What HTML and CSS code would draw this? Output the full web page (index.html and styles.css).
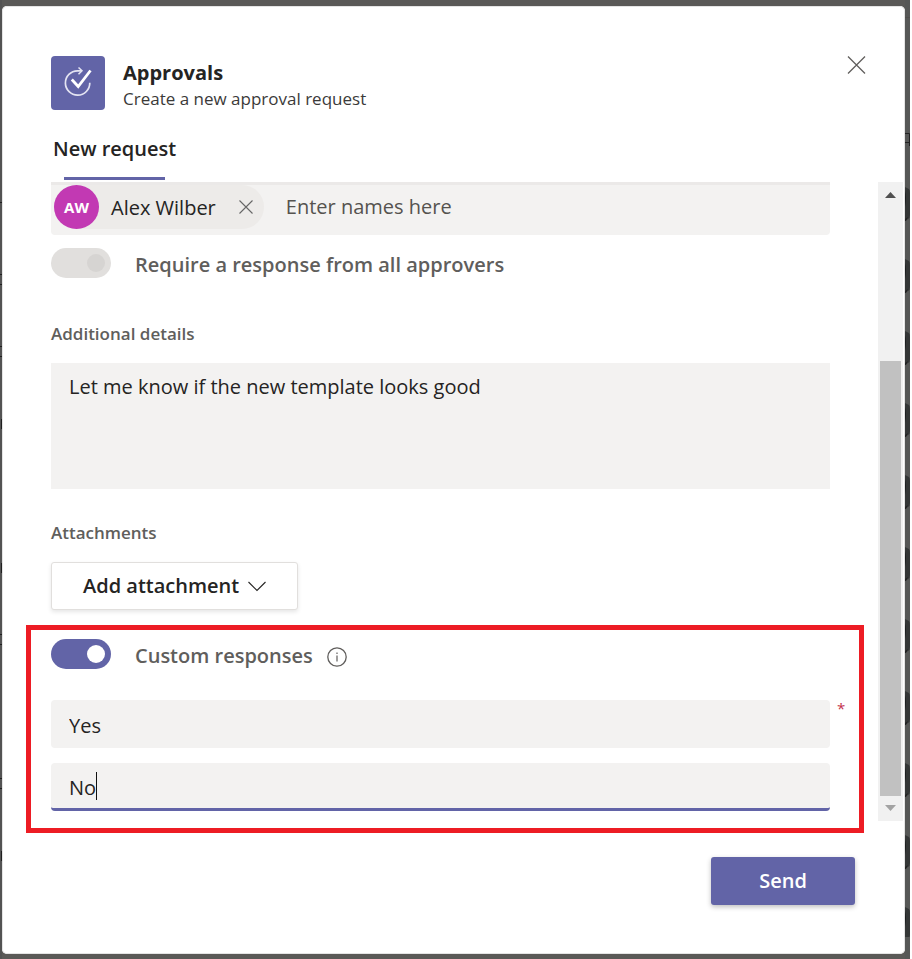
FILE: index.html
```html
<!DOCTYPE html>
<html lang="en">
<head>
<meta charset="utf-8">
<title>Approvals</title>
<link rel="stylesheet" href="styles.css">
</head>
<body>
<div class="backdrop">
  <svg class="edge edge-left" width="2" height="959" aria-hidden="true">
    <g fill="#1f1f1f">
      <rect y="202" width="2" height="1"/><rect y="274" width="2" height="1"/><rect y="284" width="2" height="1"/>
      <rect y="346" width="2" height="1"/><rect y="356" width="2" height="1"/><rect x="1" y="419" width="1" height="10"/>
      <rect x="1" y="563" width="1" height="10"/><rect y="634" width="2" height="1"/><rect y="644" width="2" height="1"/>
      <rect y="778" width="2" height="1"/><rect y="788" width="2" height="1"/><rect x="1" y="851" width="1" height="10"/>
    </g>
  </svg>
  <main class="dialog" role="dialog" aria-labelledby="title">
    <header class="header">
      <svg class="logo" viewBox="0 0 54 54" aria-hidden="true">
        <rect width="54" height="54" rx="4" fill="#6264a7"/>
        <path d="M30 14.800H26.500A12.200 12.200 0 1 0 38.800 26.800" fill="none" stroke="#e4e4f2" stroke-width="1.700"/>
        <path d="M27.500 11.500L31 14.800L27.500 18.200" fill="none" stroke="#e4e4f2" stroke-width="1.500"/>
        <path d="M20.800 23.500L27.200 30.500L39.500 14.500" fill="none" stroke="#fff" stroke-width="2.800"/>
      </svg>
      <div class="heading">
        <h1 id="title">Approvals</h1>
        <p>Create a new approval request</p>
      </div>
      <button class="icon-button" type="button" aria-label="Close">
        <svg width="20" height="18" viewBox="0 0 20 18"><path d="M1 .5L18 17.500M18 .5L1 17.500" fill="none" stroke="#605e5c" stroke-width="1.300"/></svg>
      </button>
    </header>
    <nav class="tabs"><a href="#request">New request</a></nav>
    <div class="body">
      <form class="form" id="request">
        <div class="people">
          <span class="chip">
            <span class="avatar">AW</span>
            <span class="name">Alex Wilber</span>
            <button class="icon-button" type="button" aria-label="Remove Alex Wilber">
              <svg width="16" height="16" viewBox="0 0 16 16"><path d="M1.500 1.500L14.500 14.500M14.500 1.500L1.500 14.500" fill="none" stroke="#666" stroke-width="1.100"/></svg>
            </button>
          </span>
          <input type="text" placeholder="Enter names here" aria-label="Approvers">
        </div>
        <div class="switch-row">
          <input class="switch" type="checkbox" id="all" checked disabled>
          <label for="all">Require a response from all approvers</label>
        </div>
        <label class="caption" for="details">Additional details</label>
        <textarea id="details">Let me know if the new template looks good</textarea>
        <span class="caption">Attachments</span>
        <button class="attach" type="button">Add attachment
          <svg width="18" height="11" viewBox="0 0 18 11" aria-hidden="true"><path d="M.5 1L9 9.500L17.500 1" fill="none" stroke="#252423" stroke-width="1.100"/></svg>
        </button>
        <section class="responses">
          <div class="switch-row">
            <input class="switch" type="checkbox" id="custom" checked>
            <label for="custom">Custom responses</label>
            <svg class="info" width="20" height="20" viewBox="0 0 20 20" aria-hidden="true"><circle cx="10" cy="10" r="9.200" fill="none" stroke="#605e5c" stroke-width="1.300"/><path d="M10 8.500V14.500M10 5.500V7" stroke="#605e5c" stroke-width="1.200"/></svg>
          </div>
          <div class="field">
            <input type="text" value="Yes" aria-label="Response 1" required>
            <span class="required">*</span>
          </div>
          <div class="field">
            <input class="active" type="text" value="No" aria-label="Response 2">
            <span class="caret"></span>
          </div>
        </section>
      </form>
      <div class="scrollbar" aria-hidden="true">
        <svg class="up" width="11" height="6" viewBox="0 0 11 6"><path d="M0 6L5.500 0L11 6Z" fill="#505050"/></svg>
        <div class="track"><div class="thumb"></div></div>
        <svg width="11" height="6" viewBox="0 0 11 6"><path d="M0 0L5.500 6L11 0Z" fill="#a3a3a3"/></svg>
      </div>
    </div>
    <footer class="footer"><button class="send" type="button">Send</button></footer>
  </main>
  <svg class="edge edge-right" width="5" height="959" aria-hidden="true">
    <defs>
      <pattern id="rows" width="5" height="72" y="187" patternUnits="userSpaceOnUse">
        <path d="M0 0L4 2Q5 3 5 6V28Q5 31 3 32L0 34Z" fill="#343636"/>
        <path d="M0 4Q2 10 0 20Z" fill="#1b1d1e"/>
        <path d="M0 32L3 30L1 34H0Z" fill="#202020"/>
      </pattern>
    </defs>
    <rect y="187" width="5" height="750" fill="url(#rows)"/>
    <path d="M0 133.500H4.500V146M0 142.500H4" fill="none" stroke="#222"/>
    <rect y="17" width="5" height="1" fill="#504f4d"/>
  </svg>
</div>
</body>
</html>
```
FILE: styles.css
```css
* { box-sizing: border-box; }

body {
  margin: 0;
  padding-right: 2px;
  background: #fff;
  color: #252423;
  font: 20px/28px "Open Sans", "Noto Sans", sans-serif;
}

button, input, textarea { font: inherit; color: inherit; border: 0; margin: 0; }
input, textarea { background: #f3f2f1; border-radius: 4px; outline: 0; }

.backdrop {
  display: flex;
  height: 100vh;
  min-height: 959px;
  overflow: hidden;
  background: #5a5957;
}

.edge { flex: none; background: #535353; }
.edge-right { background: #565756; }

.dialog {
  flex: 1;
  min-width: 0;
  display: flex;
  flex-direction: column;
  margin: 6px 0 5px;
  background: #fff;
  border-radius: 5px;
  box-shadow: inset 0 0 0 1px #e4e4e4;
}

.header {
  display: flex;
  align-items: flex-start;
  padding: 50px 38px 0 49px;
}

.logo { width: 54px; height: 54px; }
.heading { flex: 1; padding: 4px 0 0 18px; }
h1 { margin: 0; font-size: 20px; line-height: 26px; font-weight: 700; }
p { margin: 0; color: #3b3a39; font-size: 17px; line-height: 26px; }

.icon-button { display: flex; padding: 0; background: none; }

.tabs { margin-left: 51px; height: 70px; padding-top: 23px; }
.tabs a {
  display: inline-flex;
  flex-direction: column;
  align-items: center;
  color: inherit;
  font-weight: 600;
  text-decoration: none;
}
.tabs a::after { content: ""; width: 101px; height: 3px; margin-top: 14px; background: #6264a7; }

.body { flex: 1; display: flex; }
.form { flex: 1; min-width: 0; display: flex; flex-direction: column; padding: 0 48px 0 49px; }

.people {
  display: flex;
  height: 53px;
  padding-left: 3px;
  background: #f3f2f1;
  border-top: 3px solid #ebe9e8;
  border-radius: 0 0 4px 4px;
}
.people input { flex: 1; min-width: 0; height: 42px; padding: 0 22px; }
.people input::placeholder { color: #55534f; opacity: 1; }

.chip {
  display: flex;
  align-items: center;
  height: 44px;
  padding-right: 10px;
  background: #edebe9;
  border-radius: 22px;
}
.avatar {
  width: 45px;
  height: 44px;
  border-radius: 50%;
  background: #c239b3;
  color: #fff;
  font-size: 15px;
  font-weight: 700;
  line-height: 44px;
  text-align: center;
}
.name { padding: 2px 22px 0 12px; }

.switch-row {
  display: flex;
  align-items: center;
  height: 30px;
  margin-top: 13px;
  color: #605e5c;
  font-weight: 600;
}
.switch-row label { padding: 3px 14px 0 24px; }
.switch {
  appearance: none;
  display: flex;
  justify-content: flex-end;
  align-items: center;
  width: 60px;
  height: 30px;
  padding: 0 6px;
  border-radius: 15px;
  background: #6264a7;
}
.switch::before { content: ""; width: 18px; height: 18px; border-radius: 50%; background: #fff; }
.switch:disabled { background: #e1dfdd; }
.switch:disabled::before { background: #d6d4d2; }
.info { margin-top: 5px; }

.caption {
  margin: 42px 0 15px;
  color: #605e5c;
  font-size: 17px;
  font-weight: 600;
}
textarea { height: 126px; padding: 10px 18px; border-radius: 0; resize: none; }
textarea + .caption { margin-top: 30px; }

.attach {
  display: flex;
  align-items: center;
  align-self: flex-start;
  gap: 9px;
  height: 48px;
  padding: 0 31px;
  background: #fff;
  border: 1px solid #e1dfdd;
  border-radius: 3px;
  box-shadow: 0 2px 4px #0000001a;
  font-weight: 600;
}

.responses {
  margin: 15px -34px 0 -25px;
  height: 208px;
  padding: 9px 29px 0 20px;
  border: 5px solid #ed1c24;
}
.responses .switch-row { margin: 0 0 31px; }
.field { position: relative; display: flex; margin-bottom: 15px; }
.field input { width: 100%; height: 48px; padding: 2px 18px 0; }
.field .active { padding-top: 4px; border-bottom: 3px solid #6264a7; }
.required { position: absolute; left: 100%; top: 0; padding-left: 7px; color: #c4314b; font-size: 15px; line-height: 16px; }
.caret { position: absolute; left: 45px; top: 9px; width: 1px; height: 28px; background: #111; }

.scrollbar {
  display: flex;
  flex-direction: column;
  align-items: center;
  width: 25px;
  height: 639px;
  margin-right: 2px;
  padding: 10px 2px;
  background: #f1f1f1;
}
.track { flex: 1; width: 21px; padding: 163px 0 9px; }
.thumb { height: 100%; background: #c1c1c1; }

.footer { display: flex; justify-content: flex-end; padding: 0 50px 49px; }
.send {
  width: 144px;
  height: 48px;
  border-radius: 3px;
  background: #6264a7;
  box-shadow: 0 2px 5px #00000040;
  color: #fff;
  font-weight: 600;
}
```
